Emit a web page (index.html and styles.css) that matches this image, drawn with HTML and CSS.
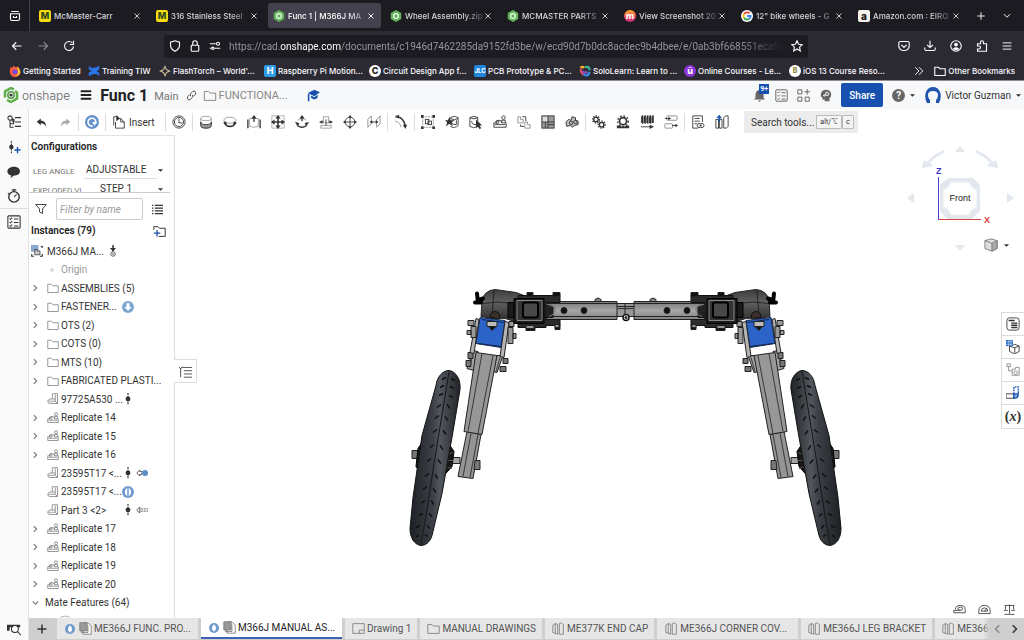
FILE: index.html
```html
<!DOCTYPE html>
<html lang="en">
<head>
    <meta charset="UTF-8">
    <meta name="viewport" content="width=device-width, initial-scale=1.0">
    <title>Func 1 | M366J MANUAL ASSEMBLY</title>
    <link rel="stylesheet" href="styles.css">
</head>
<body>
    <!-- icons -->
    <svg class="sprite" aria-hidden="true">
        <symbol id="x" viewBox="0 0 16 16"><path d="M4 4l8 8M12 4l-8 8"/></symbol>
        <symbol id="plus" viewBox="0 0 16 16"><path d="M8 2v12M2 8h12"/></symbol>
        <symbol id="down" viewBox="0 0 16 16"><path d="M3 5l5 5 5-5"/></symbol>
        <symbol id="right" viewBox="0 0 16 16"><path d="M5 3l5 5-5 5"/></symbol>
        <symbol id="left" viewBox="0 0 16 16"><path d="M11 3L6 8l5 5"/></symbol>
        <symbol id="caret" viewBox="0 0 16 16"><path class="solid" d="M2 5h12l-6 6z"/></symbol>
        <symbol id="history" viewBox="0 0 16 16"><path d="M3 2h10M2 5h12v7q0 2-2 2H4q-2 0-2-2zM6 8v2h4V8"/></symbol>
        <symbol id="back" viewBox="0 0 16 16"><path d="M14 8H2M7 3L2 8l5 5"/></symbol>
        <symbol id="forward" viewBox="0 0 16 16"><path d="M2 8h12M9 3l5 5-5 5"/></symbol>
        <symbol id="reload" viewBox="0 0 16 16"><path d="M14 8.500A6 6 0 1 1 12.500 4M14 1v5H9"/></symbol>
        <symbol id="shield" viewBox="0 0 16 16"><path d="M8 1l6 2v4q0 5-6 8-6-3-6-8V3z"/></symbol>
        <symbol id="lock" viewBox="0 0 16 16"><rect x="3" y="7" width="10" height="8" rx="1"/><path d="M5 7V4q0-3 3-3t3 3v3"/></symbol>
        <symbol id="perms" viewBox="0 0 16 16"><path d="M1 5h8M7 11h8M1 11h2"/><circle cx="12" cy="5" r="2"/><circle cx="5" cy="11" r="1.500"/></symbol>
        <symbol id="star" viewBox="0 0 16 16"><path d="M8 1l2.100 4.600 5 .6-3.700 3.400 1 5L8 12l-4.400 2.600 1-5L.9 6.200l5-.6z"/></symbol>
        <symbol id="pocket" viewBox="0 0 16 16"><path d="M3 2h10q2 0 2 2v3q0 7-7 7T1 7V4q0-2 2-2zM4.500 6.500L8 10l3.500-3.500"/></symbol>
        <symbol id="download" viewBox="0 0 16 16"><path d="M8 1v9M4 6.500L8 10l4-3.500M1 10v2q0 2 2 2h10q2 0 2-2v-2"/></symbol>
        <symbol id="account" viewBox="0 0 16 16"><circle cx="8" cy="8" r="7"/><circle class="solid" cx="8" cy="6" r="2.500"/><path class="solid" d="M3.500 12q1-2.500 4.500-2.500t4.500 2.500Q8 15 3.500 12z"/></symbol>
        <symbol id="puzzle" viewBox="0 0 16 16"><path d="M2 5h4V3q0-2 2-2t2 2v2h4v10H2v-3h2q2 0 2-2T4 8H2z"/></symbol>
        <symbol id="menu" viewBox="0 0 16 16"><path d="M1 3h14M1 8h14M1 13h14"/></symbol>
        <symbol id="more" viewBox="0 0 16 16"><path d="M2 2l6 6-6 6M8 2l6 6-6 6"/></symbol>
        <symbol id="folder" viewBox="0 0 16 16"><path d="M1 3h5l2 2h7v9H1z"/></symbol>
        <symbol id="hex" viewBox="0 0 16 16"><path class="solid" d="M8 0l7 4v8l-7 4-7-4V4z"/><circle cx="8" cy="8" r="3.200" class="ring"/></symbol>
        <symbol id="firefox" viewBox="0 0 16 16"><path fill="#ff5a36" stroke="none" d="M2 3l2 1 2-3q2 2 4 2l1-1q5 4 4 9-2 5-7 5-6 0-7-7 0-4 1-6z"/><circle cx="8" cy="9" r="3.500" fill="#7a4be0" stroke="none"/><path fill="#ffc933" stroke="none" d="M11 2q4 3 4 8-2 5-7 5 5-2 4-7-1-3-1-6z"/></symbol>
        <symbol id="confluence" viewBox="0 0 16 16"><path fill="#2874e8" stroke="none" d="M1 1q4 6 14 0v5q-3 2-4 2 3 1 4 3v4Q11 9 1 15v-5q2-1 4-2-3-1-4-3z"/></symbol>
        <symbol id="spark" viewBox="0 0 16 16"><path fill="#c9b894" stroke="none" fill-rule="evenodd" d="M8 0l2.500 5.500L16 8l-5.500 2.500L8 16l-2.500-5.500L0 8l5.500-2.500zM8 4L6.500 6.500 4 8l2.500 1.500L8 12l1.500-2.500L12 8 9.500 6.500z"/></symbol>
        <symbol id="swirl" viewBox="0 0 16 16"><g fill="none" stroke-width="3"><path stroke="#f4b62e" d="M7 4Q4 1 2 4"/><path stroke="#e24b6a" d="M3 5q-2 5 3 8"/><path stroke="#2e8de4" d="M6 13q7 3 8-4"/><path stroke="#39b59b" d="M8 3q6-2 6 4"/><path stroke="#8d51c7" d="M5 8q2 4 6 1"/></g></symbol>
        <symbol id="google" viewBox="0 0 16 16"><circle class="white" cx="8" cy="8" r="8"/><g fill="none" stroke-width="2.500"><path stroke="#ea4335" d="M4 5.500A4.800 4.800 0 0 1 11.500 4.500"/><path stroke="#fbbc05" d="M4 5.500a5 5 0 0 0 0 5"/><path stroke="#34a853" d="M4 10.500a4.800 4.800 0 0 0 7 1.200"/><path stroke="#4285f4" d="M8 8h4.800q0 2.500-1.800 3.700"/></g></symbol>

        <symbol id="tree" viewBox="0 0 16 16"><circle cx="3.500" cy="3.500" r="2.500"/><path d="M3.500 6v8h4M3.500 10h4V6M9 3h7M9 8h7M9 13h7"/><circle cx="7" cy="6" r="1.300"/></symbol>
        <symbol id="mate-add" viewBox="0 0 16 16"><path d="M5 1v14" stroke-dasharray="2 1"/><circle class="solid" cx="5" cy="8" r="2.500"/><path class="blue" d="M12 8v7M8.500 11.500h7"/></symbol>
        <symbol id="bubble" viewBox="0 0 16 16"><path class="solid" d="M8 2c9 0 9 10 1 10-2 0-3 2-5 3l1-3C-2 11-1 2 8 2z"/></symbol>
        <symbol id="timer" viewBox="0 0 16 16"><circle cx="8" cy="9" r="6" stroke-width="1.600"/><path d="M8 3V1M5.500 1h5M8 9l3-3M2.500 4.500L1 6"/></symbol>
        <symbol id="checks" viewBox="0 0 16 16"><rect x="1" y="1" width="14" height="14" rx="1"/><path d="M3 4l1 1 2-2M3 8l1 1 2-2M3 12l1 1 2-2M8 4.500h5M8 8.500h5M8 12.500h5"/></symbol>
        <symbol id="find" viewBox="0 0 16 16"><path class="solid" d="M0 3h15v3H0zM0 6h3v4H0z"/><circle cx="9" cy="8" r="4" class="white"/><circle cx="9" cy="8" r="4"/><path d="M12 11l4 4"/></symbol>
        <symbol id="undo" viewBox="0 0 16 16"><path class="solid" d="M1 7l6-5v3q7 0 8 9-3-5-8-5v3z"/></symbol>
        <symbol id="redo" viewBox="0 0 16 16"><path class="solid" d="M15 7L9 2v3Q2 5 1 14q3-5 8-5v3z"/></symbol>
        <symbol id="update" viewBox="0 0 16 16"><circle cx="8" cy="8" r="8" fill="#6493cb" stroke="none"/><path d="M9 12.500A4.500 4.500 0 1 1 12.300 9" stroke="#fff" stroke-width="1.800"/><path fill="#fff" stroke="none" d="M8 8h6l-3 4z"/></symbol>
        <symbol id="insert" viewBox="0 0 16 16"><path d="M5 4h5l4 4v7H4V8M10 4v4h4M2 12V2h4"/><path class="solid" d="M5 0l4 4-4 3z"/></symbol>
        <symbol id="clock" viewBox="0 0 16 16"><circle cx="8" cy="8" r="7"/><circle cx="8" cy="8" r="5.200"/><path d="M8 4v5h4"/></symbol>
        <symbol id="cyl" viewBox="0 0 16 16"><ellipse cx="8" cy="4" rx="6" ry="2.500" stroke="#999"/><path d="M2 4v8q0 3 6 3t6-3V4" stroke="#999"/><path fill="#999" d="M2 8q0 3 6 3t6-3v4q0 3-6 3t-6-3z"/></symbol>
        <symbol id="revolute" viewBox="0 0 16 16"><ellipse cx="8" cy="6" rx="7" ry="3.500" stroke="#999"/><path d="M2 9q1 4 6 4t6-4" stroke-width="2"/><path class="solid" d="M0 9l3-2 2 4zM16 9l-3-2-2 4z"/></symbol>
        <symbol id="slider" viewBox="0 0 16 16"><path d="M3 4h10v9q-5 2-10 0z" stroke="#999"/><path d="M1 5v10M15 5v10M8 8V2" stroke-width="1.500"/><path class="solid" d="M8 0l3 4H5z"/></symbol>
        <symbol id="planar" viewBox="0 0 16 16"><rect x="1" y="1" width="14" height="14" stroke="#aaa"/><path d="M8 2v12M2 8h12" stroke-width="1.800"/><path class="solid" d="M8 0l3 4H5zM8 16l-3-4h6zM0 8l4-3v6zM16 8l-4-3v6z"/></symbol>
        <symbol id="cylmate" viewBox="0 0 16 16"><path d="M3 6q5-4 10 0" stroke="#999"/><path d="M3 12q5 4 10 0M8 7V3" stroke-width="1.500"/><path class="solid" d="M8 0l3 4H5zM0 8l5 1-2 4zM16 8l-5 1 2 4z"/></symbol>
        <symbol id="pinslot" viewBox="0 0 16 16"><path d="M5 2h6v7H5zM2 12h12v3H2z" stroke="#999"/><path d="M2 8h3M11 8h3M8 5v7"/><path class="solid" d="M0 8l4-2v4zM16 8l-4-2v4z"/></symbol>
        <symbol id="ball" viewBox="0 0 16 16"><circle cx="8" cy="8" r="5.500"/><path d="M8 1v14M1 8h14"/><path class="solid" d="M8 0l2 3H6zM8 16l-2-3h4zM0 8l3-2v4zM16 8l-3-2v4z"/></symbol>
        <symbol id="parallel" viewBox="0 0 16 16"><path d="M1 14V5l4-4v9zM11 14V5l4-4v9z" stroke="#888"/><path d="M4 8h8"/><path class="solid" d="M3 8l3-2v4zM13 8l-3-2v4z"/></symbol>
        <symbol id="tangent" viewBox="0 0 16 16"><path d="M1 3h4q8 1 8 11M1 7q6 1 7 7" stroke="#999"/><path d="M4 2q7 1 9 11" stroke-width="1.500"/><path class="solid" d="M1 1l5-1-1 4zM10 11h5l-2 5z"/></symbol>
        <symbol id="group" viewBox="0 0 16 16"><rect x="2" y="2" width="12" height="12" stroke-dasharray="2 1" stroke="#888"/><rect x="5" y="5" width="4" height="5"/><rect x="8" y="7" width="4" height="4"/><path class="solid" d="M0 0h3v3H0zM13 0h3v3h-3zM0 13h3v3H0zM13 13h3v3h-3z"/></symbol>
        <symbol id="cylstar" viewBox="0 0 16 16"><path d="M6 3q5-3 9 0v9q-4 4-9 1M15 4q-4 3-9 0M7 7q0 4 6 4V6"/><path class="solid" d="M5 2l1.500 4H11L7.500 8.500 9 13l-4-3-4 3 1.500-4.500L0 6h3.500z"/></symbol>
        <symbol id="cylpick" viewBox="0 0 16 16"><path d="M1 3q5-3 9 0v10q-5 3-9 0zM10 3q-4 3-9 0M3 7q0 4 5 4"/><path class="solid" d="M8 5l7 7h-3l2 3-2 1-2-3-2 2z"/></symbol>
        <symbol id="replicate" viewBox="0 0 16 16"><path d="M1 14V9h3q0-3 3-3t3 3h5v5zM10 9V6h4v3M2 11h12"/><circle cx="5" cy="8" r="1.800"/><circle cx="12" cy="3" r="2"/></symbol>
        <symbol id="pattern" viewBox="0 0 16 16"><path d="M1 2h3v3h3v4H1zM9 8h3v3h3v4H9z" stroke="#888"/><path d="M4 11v2h4M6 2h4v5"/></symbol>
        <symbol id="grid" viewBox="0 0 16 16"><rect x="1" y="1" width="14" height="14" fill="#999"/><path fill="#ddd" stroke="none" d="M2 2h6v6H2z"/><path d="M8 1v14M1 8h14M5 8v7M8 11h7"/></symbol>
        <symbol id="blob" viewBox="0 0 16 16"><path fill="#bbb" d="M1 8l3-3 3 1 1-4 4 1v3l3 1v4l-4 1-2 2-3-2-4 1z"/><circle cx="7" cy="9" r="2"/><circle cx="12" cy="8" r="2"/></symbol>
        <symbol id="gears" viewBox="0 0 16 16"><circle cx="4.500" cy="5" r="2.500" stroke-width="1.500"/><circle cx="4.500" cy="5" r="4" stroke-dasharray="1.500 1.500" stroke-width="1.500"/><circle cx="11" cy="11" r="2.500" stroke-width="1.500"/><circle cx="11" cy="11" r="4" stroke-dasharray="1.500 1.500" stroke-width="1.500"/></symbol>
        <symbol id="rack" viewBox="0 0 16 16"><circle cx="8" cy="7" r="4" stroke-width="2"/><circle cx="8" cy="7" r="6" stroke-dasharray="2 2" stroke-width="1.500"/><path class="solid" d="M1 12h3l2 1h4l2-1h3v3H1z"/></symbol>
        <symbol id="screw" viewBox="0 0 16 16"><path stroke-width="1.500" d="M2 9V3q0-2 1-2v9M5 9V3q0-2 1-2v9M8 9V3q0-2 1-2v9M11 9V3q0-2 1-2v9M14 9V3q0-2 1-2v8"/><path d="M1 13.500h11"/><path class="solid" d="M11 11l5 2.500-5 2.500z"/></symbol>
        <symbol id="linear" viewBox="0 0 16 16"><rect x="3" y="1" width="12" height="5" rx="1" stroke="#888"/><rect x="1" y="10" width="9" height="5" rx="1" stroke="#888"/><path d="M1 4h6M9 12h6"/><path class="solid" d="M5 2l3 2-3 2zM13 10l3 2-3 2z"/></symbol>
        <symbol id="bom" viewBox="0 0 16 16"><path d="M2 1h11v7M2 1v14h6M4 4h6M4 7h6M4 10h3"/><ellipse cx="11" cy="12" rx="4" ry="2.500"/><circle class="solid" cx="11" cy="12" r="1.200"/></symbol>
        <symbol id="stdpart" viewBox="0 0 16 16"><path d="M1 5h3v10H1zM5 5h3v10H5zM10 3l2-2h3v12l-2 2h-3z"/><path class="blue" d="M5 8V1M2.500 3.500L5 1l2 2.500"/></symbol>

        <symbol id="filter" viewBox="0 0 16 16"><path d="M1 2h14l-5 6v6l-4-2V8z"/></symbol>
        <symbol id="list" viewBox="0 0 16 16"><path stroke-width="2" d="M4 2h12M4 6h12M4 10h12M4 14h12M0 2h2M0 6h2M0 10h2M0 14h2"/></symbol>
        <symbol id="addfolder" viewBox="0 0 16 16"><path d="M1 6V2h5l2 2h7v10H7"/><path class="blue" d="M5 6v8M1 10h8"/></symbol>
        <symbol id="assembly" viewBox="0 0 16 16"><path fill="#8aa9cf" stroke="none" d="M0 0h10v9H0z"/><path d="M5 12V6h3v2h4v5H5z" fill="#ccc"/><path d="M13 2h2v2M15 12v3h-3M1 12v3h3" stroke-width="1.500"/></symbol>
        <symbol id="anchor" viewBox="0 0 16 16"><path d="M8 0v8" stroke-width="2"/><path class="solid" d="M4 4h8l-4 5z"/><circle cx="8" cy="12" r="3"/><circle class="solid" cx="8" cy="12" r="1"/></symbol>
        <symbol id="part" viewBox="0 0 16 16"><path d="M7 1h7v13H4q-3 0-3-3 0-2 3-3h3zM7 8h4v3H2M11 8V2M11 11l3 3"/></symbol>
        <symbol id="dof" viewBox="0 0 16 16"><path d="M8 0v16" stroke-dasharray="3 1" stroke-width="1.500"/><circle class="solid" cx="8" cy="8" r="3.200"/></symbol>
        <symbol id="ref" viewBox="0 0 16 16"><path d="M5 4L1 8l4 4z"/><path d="M6 6.500h10M6 9.500h10" stroke-dasharray="3 1"/></symbol>
        <symbol id="refdot" viewBox="0 0 16 16"><path d="M5 4L1 8l4 4v-2h3V6H5z"/><circle cx="12" cy="8" r="4" fill="#5b8dc7" stroke="none"/></symbol>
        <symbol id="arrowdisc" viewBox="0 0 16 16"><circle cx="8" cy="8" r="8" fill="#7ba6d3" stroke="none"/><path class="white" d="M6 3h4v5h3l-5 5-5-5h3z"/></symbol>
        <symbol id="syncdisc" viewBox="0 0 16 16"><circle cx="8" cy="8" r="8" fill="#6f9bcc" stroke="none"/><path class="white" d="M7 2v12l-3-4V6zM9 2v12l3-4V6z"/></symbol>
        <symbol id="statedisc" viewBox="0 0 16 16"><circle cx="8" cy="8" r="8" fill="#6f9bcc" stroke="none"/><path class="white" d="M8 2l3 4v4l-3 4-3-4V6z"/></symbol>
        <symbol id="outline" viewBox="0 0 16 16"><path d="M4 3h12M6 7h10M6 11h10M6 15h10M0 2l2 3 2-3M2 5v10"/></symbol>
        <symbol id="asmtab" viewBox="0 0 16 16"><path fill="#fff" d="M5 1h6l4 4v10H5z"/><path fill="#999" d="M1 1h9v10H1z"/><path d="M3 11v2h8V4"/></symbol>
        <symbol id="drawtab" viewBox="0 0 16 16"><path d="M1 2h14v12H1zM9 14v-4h6"/></symbol>
        <symbol id="studio" viewBox="0 0 16 16"><path d="M1 4l3-2v12l-3-1zM4 2l3 1v12l-3-1M9 2l2-1 3 2v12H9z"/></symbol>

        <symbol id="tape" viewBox="0 0 16 16"><path d="M3 8q0-5 6-5t6 5v4H1V9h8"/><ellipse cx="9" cy="7" rx="3" ry="2"/></symbol>
        <symbol id="protractor" viewBox="0 0 16 16"><path d="M1 13V10q0-7 7-7t7 7v3zM4 10q0-4 4-4t4 4zM8 10l3-4"/></symbol>
        <symbol id="scale" viewBox="0 0 16 16"><path d="M8 2v11M2 3h12M3 3v5M13 3v5M1 9h5M10 9h5M2 14h12"/></symbol>
        <symbol id="proplist" viewBox="0 0 16 16"><rect x="1" y="1" width="14" height="14" rx="3"/><path stroke-width="1.600" d="M3 4h7M6 7h7M6 9.500h7M6 12h7"/></symbol>
        <symbol id="cubegrid" viewBox="0 0 16 16"><path d="M4 7l6-2 5 2v6l-5 3-6-3zM4 7l6 2 5-2M10 9v6"/><path fill="#2b6fc4" stroke="none" d="M0 0h8v7H0z"/><path stroke="#fff" stroke-width=".5" d="M0 2h8M0 5h8M3 0v7M5.500 0v7"/></symbol>
        <symbol id="linkpart" viewBox="0 0 16 16"><path d="M1 1h4v3H1zM3 4v5h4M7 7h4V5h4v9H7z"/><circle cx="11" cy="11" r="2"/></symbol>
        <symbol id="sheet" viewBox="0 0 16 16"><path d="M0 9h9v5H0z"/><path class="blue" d="M9 9V1h5v8" stroke-dasharray="2 1"/><path class="blue" fill="#9bb8dd" d="M9 9h5q0 5-5 5z"/></symbol>
    </svg>

    <div class="browser">
        <div class="tab-strip">
            <button class="recent" aria-label="Recent browsing"><svg class="icon"><use href="#history"/></svg></button>
            <div class="tab"><span class="fav mc">M</span><span class="tab-name">McMaster-Carr</span><button class="close" aria-label="Close"><svg><use href="#x"/></svg></button></div>
            <div class="tab"><span class="fav mc">M</span><span class="tab-name fade">316 Stainless Steel</span><button class="close" aria-label="Close"><svg><use href="#x"/></svg></button></div>
            <div class="tab current"><svg class="fav hex"><use href="#hex"/></svg><span class="tab-name fade">Func 1 | M366J MA</span><button class="close" aria-label="Close"><svg><use href="#x"/></svg></button></div>
            <div class="tab"><svg class="fav hex"><use href="#hex"/></svg><span class="tab-name fade">Wheel Assembly.zip</span><button class="close" aria-label="Close"><svg><use href="#x"/></svg></button></div>
            <div class="tab"><svg class="fav hex"><use href="#hex"/></svg><span class="tab-name fade">MCMASTER PARTS</span><button class="close" aria-label="Close"><svg><use href="#x"/></svg></button></div>
            <div class="tab"><span class="fav shot">m</span><span class="tab-name fade">View Screenshot 202</span><button class="close" aria-label="Close"><svg><use href="#x"/></svg></button></div>
            <div class="tab"><svg class="fav"><use href="#google"/></svg><span class="tab-name fade">12" bike wheels - G</span><button class="close" aria-label="Close"><svg><use href="#x"/></svg></button></div>
            <div class="tab"><span class="fav amazon">a</span><span class="tab-name fade">Amazon.com : EIRO</span><button class="close" aria-label="Close"><svg><use href="#x"/></svg></button></div>
            <button class="strip-button" aria-label="New tab"><svg class="small-icon"><use href="#plus"/></svg></button>
            <button class="strip-button last" aria-label="List all tabs"><svg class="small-icon"><use href="#down"/></svg></button>
        </div>

        <div class="nav-bar">
            <div class="nav-buttons">
                <button aria-label="Back"><svg class="icon"><use href="#back"/></svg></button>
                <button class="dim" aria-label="Forward"><svg class="icon"><use href="#forward"/></svg></button>
                <button aria-label="Reload"><svg class="icon"><use href="#reload"/></svg></button>
            </div>
            <div class="url-bar">
                <svg class="icon"><use href="#shield"/></svg>
                <svg class="icon"><use href="#lock"/></svg>
                <svg class="icon"><use href="#perms"/></svg>
                <div class="url" role="textbox" aria-label="Address" contenteditable="true" spellcheck="false">https://cad.<span class="domain">onshape.com</span>/documents/c1946d7462285da9152fd3be/w/ecd90d7b0dc8acdec9b4dbee/e/0ab3bf668551ecafe</div>
                <button aria-label="Bookmark this page"><svg class="icon"><use href="#star"/></svg></button>
            </div>
            <div class="nav-tools">
                <button aria-label="Pocket"><svg class="icon"><use href="#pocket"/></svg></button>
                <button aria-label="Downloads"><svg class="icon"><use href="#download"/></svg></button>
                <button aria-label="Account"><svg class="icon"><use href="#account"/></svg></button>
                <button aria-label="Extensions"><svg class="icon"><use href="#puzzle"/></svg></button>
                <button aria-label="Menu"><svg class="small-icon"><use href="#menu"/></svg></button>
            </div>
        </div>

        <nav class="bookmarks">
            <a href="#" class="bm-first"><svg class="fav"><use href="#firefox"/></svg>Getting Started</a>
            <a href="#" class="bm-short"><svg class="fav"><use href="#confluence"/></svg>Training TIW</a>
            <a href="#"><svg class="fav"><use href="#spark"/></svg>FlashTorch – World'...</a>
            <a href="#"><span class="fav hack">H</span>Raspberry Pi Motion...</a>
            <a href="#"><span class="fav circuit">C</span>Circuit Design App f...</a>
            <a href="#"><span class="fav jlc">JLC</span>PCB Prototype &amp; PC...</a>
            <a href="#"><svg class="fav"><use href="#swirl"/></svg>SoloLearn: Learn to ...</a>
            <a href="#"><span class="fav udemy">û</span>Online Courses - Le...</a>
            <a href="#"><span class="fav ios">B</span>iOS 13 Course Reso...</a>
            <button class="overflow" aria-label="More bookmarks"><svg class="small-icon"><use href="#more"/></svg></button>
            <a href="#" class="other"><svg class="fav"><use href="#folder"/></svg>Other Bookmarks</a>
        </nav>
    </div>

    <header class="doc-header">
        <svg class="logo" viewBox="0 0 16 16"><path fill="none" stroke="#5fae46" stroke-width="2.500" d="M11 2.500L8 1 2 4.500v6M4 13l4 2 6-3.500v-6L12 4"/><circle cx="8" cy="8" r="3.200" fill="none" stroke="#4f9c3d" stroke-width="1.500"/><circle cx="8" cy="8" r="1" fill="#4f9c3d"/></svg>
        <span class="brand">onshape</span>
        <button class="doc-menu" aria-label="Document menu"><svg class="icon"><use href="#menu"/></svg></button>
        <h1>Func 1</h1>
        <span class="workspace">Main</span>
        <svg class="link-icon" viewBox="0 0 16 16"><path d="M7 9q-2-2 0-4l3-3q2-1 3 0t1 4l-3 3M9 7q2 2 0 4l-3 3q-2 1-3 0t-1-4l3-3"/></svg>
        <a href="#" class="project"><svg><use href="#folder"/></svg>FUNCTIONA...</a>
        <svg class="cap" viewBox="0 0 16 16"><path d="M1 5l8-4 7 3-7 5zM5 8l4 2 4-3v4l-4 2-4-2zM1 6h2v9H1z"/></svg>
        <div class="account">
            <button class="bell" aria-label="Notifications"><svg viewBox="0 0 16 16"><path d="M8 1q5 1 5 7v3l2 2H1l2-2V8q0-6 5-7zM6 14h4l-2 2z"/></svg><span class="badge">9+</span></button>
            <button aria-label="Tasks"><svg><use href="#checks"/></svg></button>
            <button aria-label="App store"><svg viewBox="0 0 16 16"><path d="M1 1h5v5H1zM1 10h5v5H1zM10 10h5v5h-5zM12.500 0v7M9 3.500h7"/></svg></button>
            <button aria-label="Learning"><svg viewBox="0 0 16 16"><path class="solid" d="M8 1q7 0 7 6 0 3-2 4v4H7v-2H4v-3L2 9q0-8 6-8z"/><path stroke="#fff" d="M5 8l3-1M6 9l2-1"/><circle cx="10" cy="6" r="2" stroke="#fff"/></svg></button>
            <button class="share">Share</button>
            <button class="help" aria-label="Help"><span>?</span><svg class="caret"><use href="#caret"/></svg></button>
            <button class="user"><svg class="avatar" viewBox="0 0 16 16"><path d="M2 16Q-1 10 1 5q2-5 7-5t7 5q2 5-1 11h-3v-3q2-2 2-5 0-4-5-4T3 8q0 3 2 5v3z"/></svg>Victor Guzman<svg class="caret"><use href="#caret"/></svg></button>
        </div>
    </header>

    <div class="workspace-area">
        <aside class="rail">
            <button aria-label="Features"><svg><use href="#tree"/></svg></button>
            <button aria-label="Add mate"><svg><use href="#mate-add"/></svg></button>
            <button aria-label="Comments"><svg><use href="#bubble"/></svg></button>
            <button class="ruled" aria-label="History"><svg><use href="#timer"/></svg></button>
            <button aria-label="Checklist"><svg><use href="#checks"/></svg></button>
            <button class="rail-end" aria-label="Find tabs"><svg><use href="#find"/></svg></button>
        </aside>

        <main class="editor">
            <div class="toolbar">
                <button class="undo" aria-label="Undo"><svg><use href="#undo"/></svg></button>
                <button class="undo faded" aria-label="Redo"><svg><use href="#redo"/></svg></button>
                <span class="sep"></span>
                <button aria-label="Update"><svg><use href="#update"/></svg></button>
                <span class="sep"></span>
                <button class="insert"><svg><use href="#insert"/></svg>Insert</button>
                <span class="sep"></span>
                <button aria-label="Animate"><svg><use href="#clock"/></svg></button>
                <span class="sep"></span>
                <button aria-label="Fastened"><svg><use href="#cyl"/></svg></button>
                <button aria-label="Revolute"><svg><use href="#revolute"/></svg></button>
                <button aria-label="Slider"><svg><use href="#slider"/></svg></button>
                <button aria-label="Planar"><svg><use href="#planar"/></svg></button>
                <button aria-label="Cylindrical"><svg><use href="#cylmate"/></svg></button>
                <button aria-label="Pin slot"><svg><use href="#pinslot"/></svg></button>
                <button aria-label="Ball"><svg><use href="#ball"/></svg></button>
                <button aria-label="Parallel"><svg><use href="#parallel"/></svg></button>
                <span class="sep"></span>
                <button aria-label="Tangent"><svg><use href="#tangent"/></svg></button>
                <span class="sep"></span>
                <button aria-label="Group"><svg><use href="#group"/></svg></button>
                <button aria-label="Mate connector"><svg><use href="#cylstar"/></svg></button>
                <button aria-label="Select part"><svg><use href="#cylpick"/></svg></button>
                <button aria-label="Replicate"><svg><use href="#replicate"/></svg></button>
                <button aria-label="Pattern"><svg><use href="#pattern"/></svg></button>
                <button aria-label="Configure"><svg><use href="#grid"/></svg></button>
                <button aria-label="Snap"><svg><use href="#blob"/></svg></button>
                <span class="sep"></span>
                <button aria-label="Gear relation"><svg><use href="#gears"/></svg></button>
                <button aria-label="Rack and pinion"><svg><use href="#rack"/></svg></button>
                <button aria-label="Screw relation"><svg><use href="#screw"/></svg></button>
                <button aria-label="Linear relation"><svg><use href="#linear"/></svg></button>
                <span class="sep"></span>
                <button aria-label="Display states"><svg><use href="#bom"/></svg></button>
                <button aria-label="Standard parts"><svg><use href="#stdpart"/></svg></button>
                <button class="search-tools">Search tools... <kbd>alt/⌥</kbd><kbd>c</kbd></button>
            </div>

            <div class="stage">
                <section class="panel">
                    <div class="config">
                        <h2>Configurations</h2>
                        <div class="config-row">
                            <label for="leg-angle">LEG ANGLE</label>
                            <select id="leg-angle"><option>ADJUSTABLE</option></select>
                            <svg class="caret"><use href="#caret"/></svg>
                        </div>
                        <div class="config-row second">
                            <label for="exploded">EXPLODED VI</label>
                            <select id="exploded"><option>STEP 1</option></select>
                            <svg class="caret"><use href="#caret"/></svg>
                        </div>
                    </div>
                    <div class="filter-row">
                        <svg><use href="#filter"/></svg>
                        <input type="text" placeholder="Filter by name" aria-label="Filter by name">
                        <button aria-label="List options"><svg><use href="#list"/></svg></button>
                    </div>
                    <div class="instances">
                        <h2>Instances (79)</h2>
                        <button aria-label="Add folder"><svg><use href="#addfolder"/></svg></button>
                    </div>
                    <ul class="tree">
                        <li class="root"><svg><use href="#assembly"/></svg><span>M366J MA...</span><svg><use href="#anchor"/></svg></li>
                        <li class="origin"><i></i><span>Origin</span></li>
                        <li><svg class="chev"><use href="#right"/></svg><svg class="kind"><use href="#folder"/></svg><span>ASSEMBLIES (5)</span></li>
                        <li><svg class="chev"><use href="#right"/></svg><svg class="kind"><use href="#folder"/></svg><span class="cut">FASTENER...</span><svg class="mark"><use href="#arrowdisc"/></svg></li>
                        <li><svg class="chev"><use href="#right"/></svg><svg class="kind"><use href="#folder"/></svg><span>OTS (2)</span></li>
                        <li><svg class="chev"><use href="#right"/></svg><svg class="kind"><use href="#folder"/></svg><span>COTS (0)</span></li>
                        <li><svg class="chev"><use href="#right"/></svg><svg class="kind"><use href="#folder"/></svg><span>MTS (10)</span></li>
                        <li><svg class="chev"><use href="#right"/></svg><svg class="kind"><use href="#folder"/></svg><span>FABRICATED PLASTI...</span></li>
                        <li class="leaf"><svg class="kind"><use href="#part"/></svg><span class="cut">97725A530 ...</span><svg class="mark"><use href="#dof"/></svg></li>
                        <li><svg class="chev"><use href="#right"/></svg><svg class="kind"><use href="#replicate"/></svg><span>Replicate 14</span></li>
                        <li><svg class="chev"><use href="#right"/></svg><svg class="kind"><use href="#replicate"/></svg><span>Replicate 15</span></li>
                        <li><svg class="chev"><use href="#right"/></svg><svg class="kind"><use href="#replicate"/></svg><span>Replicate 16</span></li>
                        <li class="leaf"><svg class="kind"><use href="#part"/></svg><span class="cut">23595T17 &lt;...</span><svg class="mark"><use href="#dof"/></svg><svg class="ref"><use href="#refdot"/></svg></li>
                        <li class="leaf"><svg class="kind"><use href="#part"/></svg><span class="cut">23595T17 &lt;...</span><svg class="mark"><use href="#syncdisc"/></svg></li>
                        <li class="leaf"><svg class="kind"><use href="#part"/></svg><span class="cut">Part 3 &lt;2&gt;</span><svg class="mark"><use href="#dof"/></svg><svg class="ref"><use href="#ref"/></svg></li>
                        <li><svg class="chev"><use href="#right"/></svg><svg class="kind"><use href="#replicate"/></svg><span>Replicate 17</span></li>
                        <li><svg class="chev"><use href="#right"/></svg><svg class="kind"><use href="#replicate"/></svg><span>Replicate 18</span></li>
                        <li><svg class="chev"><use href="#right"/></svg><svg class="kind"><use href="#replicate"/></svg><span>Replicate 19</span></li>
                        <li><svg class="chev"><use href="#right"/></svg><svg class="kind"><use href="#replicate"/></svg><span>Replicate 20</span></li>
                        <li class="mates"><svg class="chev"><use href="#down"/></svg><span>Mate Features (64)</span></li>
                        <li class="mate"><svg class="chev"><use href="#right"/></svg><svg class="kind"><use href="#cyl"/></svg></li>
                    </ul>
                </section>

                <div class="canvas">
                    <svg class="model" viewBox="175 135 849 482">
                        <defs>
                            <linearGradient id="tire" x1="0" x2="1"><stop offset="0" stop-color="#1d2024"/><stop offset=".45" stop-color="#3c4046"/><stop offset=".6" stop-color="#52575d"/><stop offset="1" stop-color="#202327"/></linearGradient>
                            <linearGradient id="tube" x1="0" x2="0" y1="0" y2="1"><stop offset="0" stop-color="#777"/><stop offset=".5" stop-color="#a6a6a6"/><stop offset="1" stop-color="#808080"/></linearGradient>
                            <linearGradient id="elbow" x1="0" x2="0" y1="0" y2="1"><stop offset="0" stop-color="#3c3c3c"/><stop offset=".4" stop-color="#606060"/><stop offset="1" stop-color="#2a2a2a"/></linearGradient>
                            <g id="half" stroke="#222" stroke-width="1" stroke-linejoin="round">
                                <!-- cross bar -->
                                <path fill="#999" d="M616 303h10v13h-10z"/>
                                <path fill="url(#tube)" d="M543 301h74v18h-74z"/>
                                <path fill="none" d="M545 303h72M545 316h72M617 306h9"/>
                                <path fill="#888" d="M595 301v-2q3-3 6 0v2z"/>
                                <circle cx="564" cy="310" r="3" fill="#111"/><circle cx="584" cy="310" r="3" fill="#111"/>
                                <!-- leg -->
                                <path fill="#949494" d="M467 431l14 3-8 44-15-2z"/>
                                <path fill="none" stroke-width=".8" d="M471 433l-8 43M478 434l-8 43"/>
                                <path fill="#a3a3a3" d="M473 350l5 1-4 19-7-2zM497 355l6 0-6 17-5-1z"/>
                                <path fill="#979797" d="M476 352l21 3-15 79-18-3z"/>
                                <path fill="none" stroke-width=".8" d="M482 353l-14 78M493 355l-15 78M500 357l-4 14M472 355l-2 12"/>
                                <path fill="#777" d="M468 352h5v6h-5zM466 360h5v6h-5zM503 358h5v5h-5zM500 366h6v5h-6z"/>
                                <!-- blue block and side plates -->
                                <path fill="#2b63c8" stroke="#13284f" d="M480 317l25 3-4 27-25-4z"/>
                                <path fill="none" stroke="#13284f" d="M478 343l24 3M482 319l22 3"/>
                                <path fill="#b5b5b5" d="M476 318l3 1-5 34-4-1zM505 321l4 1-5 35-4-1z"/>
                                <path fill="#999" d="M468 320h6v5h-6zM471 326h5v11h-5zM467 330h4v4h-4zM508 327h5v16h-5zM509 321h5v5h-5zM513 333h3v5h-3z"/>
                                <path fill="#bbb" d="M487 321h10v5h-10z"/><path fill="#111" d="M489 326h7l-4 4z"/>
                                <!-- elbow -->
                                <path fill="url(#elbow)" d="M481 316l1-16q2-10 13-11l21 3 8 3h22v26h-31l-10-3q-8-1-12 0z"/>
                                <path fill="none" stroke="#111" stroke-width=".7" d="M494 290l-2 26M482 303q16-3 32 0"/>
                                <path fill="#3b2f2a" stroke="#111" d="M491 313q4-4 8 0l1 5-10-1z"/>
                                <path fill="#2b2b2b" stroke="#111" d="M518 295h42v7h-14v17h14v6h-14v2h-28v-15z"/>
                                <path fill="#1b1b1b" stroke="#000" d="M508 302h7v15h-7z"/>
                                <path fill="#1b1b1b" stroke="#000" d="M514 298h30v25h-30z"/>
                                <path fill="#333" stroke="#888" d="M517 300h25v20h-25z"/>
                                <rect x="523" y="302" width="15" height="15" rx="2" fill="#484848" stroke="#000" stroke-width="2"/>
                                <path fill="#222" stroke="#111" d="M544 306q8-3 9 1v10h-8z"/>
                                <path fill="none" stroke="#777" d="M549 305q7 0 6 5t-6 6"/>
                                <path fill="#111" d="M527 292h6v4h-6zM553 292h7v4h-7zM526 326h9v4h-9zM555 324h5v5h-5z"/>
                                <path fill="#999" d="M526 325h8v3h-8zM555 324h4v3h-4z"/>
                                <path stroke="#000" stroke-width="4" stroke-linecap="round" d="M477 293l1 9M475 302h6M480 299l3-1"/>
                                <!-- axle and wheel -->
                                <path fill="#a5a5a5" d="M446 457h14v6h-14z"/>
                                <path fill="#777" d="M475 460h5v9h-6zM412 450h6v8h-6z"/>
                                <path fill="#181818" stroke="#000" d="M424 439l-6 9-2 18 8 10 20-1 8-9 2-15-6-9z"/>
                                <path fill="none" stroke="#555" d="M419 450l6 2M418 456l6 1M418 462l6 0M448 454l5-2M447 460l6 0M446 466l6 2"/>
                                <path fill="url(#tire)" stroke="#111" d="M436 385c1-9 7-15 13-15 7 1 12 9 11 19l-7 42-11 62-10 42c-2 7-7 10-11 10-7-1-11-8-11-17l3-31 9-62z"/>
                                <path fill="none" stroke="#15171a" d="M449 371l-7 43-7 43-8 52-6 35"/>
                                <path fill="none" stroke="#0d0f11" stroke-width="1.400" d="M442 379l4-2M440 387l4-2M439 395l4-2M437 407l4-3M435 418l4-3M433 432l4-3M430 447l4-3M427 461l4-3M425 476l4-3M423 489l4-3M421 503l4-3M419 515l4-2M416 527l4-2M416 536l3-1M451 378l4 2M450 386l4 2M449 395l4 2M447 404l3 4M445 416l3 4M443 430l3 4M440 445l3 4M438 459l3 4M435 474l3 4M433 488l3 4M431 500l3 4M429 513l3 3M427 525l3 3M425 534l3 2"/>
                            </g>
                        </defs>
                        <use href="#half"/>
                        <use href="#half" transform="translate(1251 0) scale(-1 1)"/>
                        <path fill="none" stroke="#333" d="M618 308h15"/>
                        <circle cx="626" cy="317" r="3" fill="#fff" stroke="#111" stroke-width="1.500"/><circle cx="626" cy="317" r="1" fill="#111"/>
                    </svg>

                    <button class="handle" aria-label="Toggle list"><svg><use href="#outline"/></svg></button>

                    <div class="view-cube">
                        <svg viewBox="0 0 110 112">
                            <g fill="#e2e8ed">
                                <path d="M55 1l5 6H50zM55 106l5-6H50zM2 53l7-5v10zM109 53l-7-5v10z"/>
                                <path d="M17 23l2-8 3 2Q30 8 39 5v3Q31 11 25 18l3 3zM93 23l-2-8-3 2Q80 8 71 5v3q8 3 14 10l-3 3z"/>
                                <path d="M43 33h25l7 7v26l-8 8H42l-7-8V40z"/>
                            </g>
                            <path fill="#fff" stroke="#e9edf1" d="M46 37h18q2 6 8 8v17q-6 2-8 8H46q-2-6-8-8V45q6-2 8-8z"/>
                            <path stroke="#4a43d6" d="M33.500 32v43"/><path stroke="#d84545" d="M34 74.500h42"/>
                            <text x="31" y="29" class="axis-z">Z</text>
                            <text x="79" y="78" class="axis-x">X</text>
                            <text x="55" y="56" class="face">Front</text>
                        </svg>
                    </div>
                    <button class="view-mode" aria-label="View options"><svg class="box" viewBox="0 0 16 16"><path fill="#ddd" d="M1 3l7-2 7 2v9l-6 3-8-3z"/><path fill="#aaa" d="M9 6l6-3v9l-6 3z"/><path d="M1 3l8 3"/></svg><svg class="caret"><use href="#caret"/></svg></button>

                    <div class="side-tools">
                        <button aria-label="Properties"><svg><use href="#proplist"/></svg></button>
                        <button aria-label="Configuration table"><svg><use href="#cubegrid"/></svg></button>
                        <button class="pale" aria-label="In context"><svg><use href="#linkpart"/></svg></button>
                        <button aria-label="Exploded view"><svg><use href="#sheet"/></svg></button>
                        <button class="var" aria-label="Variables">(<i>x</i>)</button>
                    </div>

                    <div class="measure">
                        <button aria-label="Measure"><svg><use href="#tape"/></svg></button>
                        <button aria-label="Angle"><svg><use href="#protractor"/></svg></button>
                        <button aria-label="Mass properties"><svg><use href="#scale"/></svg></button>
                    </div>
                </div>
            </div>

            <div class="doc-tabs">
                <button class="add" aria-label="Insert tab"><svg><use href="#plus"/></svg></button>
                <button class="doc-tab wide"><svg class="state"><use href="#statedisc"/></svg><svg><use href="#asmtab"/></svg>ME366J FUNC. PRO...</button>
                <button class="doc-tab wide active"><svg class="state"><use href="#statedisc"/></svg><svg><use href="#asmtab"/></svg>M366J MANUAL AS...</button>
                <button class="doc-tab"><svg><use href="#drawtab"/></svg>Drawing 1</button>
                <button class="doc-tab"><svg><use href="#folder"/></svg>MANUAL DRAWINGS</button>
                <button class="doc-tab"><svg><use href="#studio"/></svg>ME377K END CAP</button>
                <button class="doc-tab wide"><svg><use href="#studio"/></svg>ME366J CORNER COV...</button>
                <button class="doc-tab"><svg><use href="#studio"/></svg>ME366J LEG BRACKET</button>
                <button class="doc-tab"><svg><use href="#studio"/></svg>ME366</button>
                <div class="tab-scroll">
                    <button class="dim" aria-label="Scroll left"><svg><use href="#left"/></svg></button>
                    <button aria-label="Scroll right"><svg><use href="#right"/></svg></button>
                </div>
            </div>
        </main>
    </div>
</body>
</html>
```
FILE: styles.css
```css
* {
    box-sizing: border-box;
}
body {
    margin: 0;
    height: 100vh;
    display: flex;
    flex-direction: column;
    overflow: hidden;
    font-family: Roboto, "Liberation Sans", sans-serif;
    font-size: 10px;
    color: #333;
    background-color: #fff;
}
button {
    display: flex;
    align-items: center;
    justify-content: center;
    padding: 0;
    border: none;
    background: none;
    color: inherit;
    font: inherit;
    cursor: pointer;
}
a {
    color: inherit;
    text-decoration: none;
}
h1, h2 {
    margin: 0;
}
svg {
    flex: none;
    fill: none;
    stroke: currentColor;
    stroke-width: 1.2px;
}
.sprite {
    position: absolute;
    width: 0;
    height: 0;
}
.solid {
    fill: currentColor;
    stroke: none;
}
.white {
    fill: #fff;
    stroke: none;
}
.ring {
    stroke: #fff;
    stroke-width: 1.5px;
}
.blue {
    stroke: #1651b0;
    stroke-width: 1.6px;
}
.icon {
    width: 12px;
    height: 12px;
}
.small-icon {
    width: 10px;
    height: 10px;
}
.caret {
    width: 7px;
    height: 7px;
}

/* browser window */
.browser {
    flex: none;
    color: #fbfbfe;
    background-color: #2b2a33;
    border-bottom: 1px solid #8e8e93;
    font-family: Inter, "Liberation Sans", sans-serif;
}
.browser svg {
    stroke-width: 1.5px;
}
.tab-strip {
    display: flex;
    align-items: center;
    gap: 4px;
    height: 31px;
    background-color: #1c1b22;
}
.recent {
    width: 30px;
    height: 31px;
    border-right: 1px solid #42414d;
}
.tab {
    display: flex;
    align-items: center;
    flex: 0 1 113px;
    min-width: 0;
    height: 25px;
    padding: 0 5px;
    border-radius: 3px;
    font-size: 8px;
    font-weight: 500;
    color: #d5d5da;
}
.tab.current {
    background-color: #42414d;
    color: #fff;
}
.fav {
    display: inline-flex;
    align-items: center;
    justify-content: center;
    flex: none;
    width: 12px;
    height: 12px;
    border-radius: 2px;
    font-size: 9px;
    font-weight: 800;
    line-height: 12px;
}
.tab-name {
    flex: 1;
    margin-left: 3px;
    overflow: hidden;
    white-space: nowrap;
}
.fade {
    mask-image: linear-gradient(to right, #000 75%, rgba(0, 0, 0, 0.2));
}
.close, .close svg {
    width: 10px;
    height: 10px;
}
.mc {
    background-color: #f6dc12;
    color: #2c4a1a;
}
.hex {
    color: #62b558;
}
.shot {
    border-radius: 50%;
    color: #fff;
    background: linear-gradient(#ffb02e, #f0455a 60%, #c22c85);
}
.amazon {
    background-color: #f3f1ea;
    color: #111;
    font-size: 10px;
}
.strip-button {
    width: 22px;
    height: 24px;
}
.nav-bar {
    display: flex;
    align-items: center;
    height: 30px;
}
.nav-buttons {
    display: flex;
    gap: 14px;
    width: 164px;
    padding-left: 11px;
}
.dim {
    opacity: 0.45;
}
.url-bar {
    display: flex;
    align-items: center;
    flex: 1;
    gap: 8px;
    min-width: 0;
    height: 23px;
    padding: 0 5px;
    border-radius: 3px;
    background-color: #1c1b22;
}
.url {
    flex: 1;
    min-width: 0;
    overflow: hidden;
    white-space: nowrap;
    font-family: Roboto, sans-serif;
    font-size: 10px;
    color: #94939b;
    outline: none;
    mask-image: linear-gradient(to right, #000 92%, transparent);
}
.domain {
    color: #fbfbfe;
}
.nav-tools {
    display: flex;
    justify-content: flex-end;
    gap: 14px;
    width: 216px;
    padding-right: 12px;
}
.bookmarks {
    display: flex;
    align-items: center;
    height: 19px;
    padding: 0 9px;
    font-size: 8px;
    font-weight: 500;
    white-space: nowrap;
}
.bookmarks a {
    display: flex;
    align-items: center;
    gap: 2px;
    flex: 0 1 105px;
}
.bookmarks .bm-first {
    flex-basis: 79px;
}
.bookmarks .bm-short {
    flex-basis: 71px;
}
.bookmarks .other {
    flex: none;
    margin-left: 10px;
}
.overflow {
    margin-left: auto;
}
.hack {
    background-color: #2e9fe6;
}
.circuit {
    border-radius: 50%;
    background-color: #fff;
    color: #222;
}
.jlc {
    background-color: #1f87dd;
    font-size: 6px;
}
.udemy {
    border-radius: 50%;
    background-color: #8b35d8;
}
.ios {
    border-radius: 50%;
    background-color: #fff;
    color: #8c8a3a;
    font-size: 7px;
}

/* document header */
.doc-header {
    display: flex;
    align-items: center;
    flex: none;
    height: 28px;
    padding: 0 2px 0 3px;
    background-color: #f7f8fa;
    white-space: nowrap;
}
.logo {
    width: 16px;
    height: 16px;
}
.brand {
    margin-left: 3px;
    font-family: Inter, sans-serif;
    font-size: 12px;
    font-weight: 300;
    color: #666;
}
.doc-menu {
    margin-left: 10px;
    color: #222;
}
.doc-menu svg {
    stroke-width: 2.5px;
}
h1 {
    margin-left: 8px;
    font-size: 16px;
    font-weight: 700;
    color: #222;
}
.workspace {
    margin: 2px 0 0 6px;
    font-size: 11px;
    color: #777;
}
.link-icon {
    width: 11px;
    height: 11px;
    margin-left: 7px;
}
.project {
    display: flex;
    align-items: center;
    gap: 2px;
    margin-left: 6px;
    font-size: 11px;
    color: #888;
}
.project svg {
    width: 14px;
    height: 13px;
}
.cap {
    width: 13px;
    height: 13px;
    margin-left: 19px;
    fill: #1651b0;
    stroke: none;
}
.account {
    display: flex;
    align-items: center;
    gap: 9px;
    margin-left: auto;
    color: #666;
}
.account svg {
    width: 13px;
    height: 13px;
}
.bell {
    position: relative;
}
.bell svg {
    fill: #666;
    stroke: none;
}
.badge {
    position: absolute;
    top: -5px;
    left: 6px;
    padding: 0 1px;
    background-color: #1651b0;
    color: #fff;
    font-size: 7px;
    font-weight: 700;
    line-height: 10px;
}
.share {
    width: 42px;
    height: 24px;
    border-radius: 2px;
    background-color: #1651b0;
    color: #fff;
    font-size: 10px;
    font-weight: 500;
}
.help {
    gap: 4px;
}
.help span {
    width: 13px;
    height: 13px;
    border-radius: 50%;
    background-color: #666;
    color: #fff;
    font-weight: 700;
    line-height: 13px;
}
.account .caret {
    width: 7px;
    height: 7px;
    color: #333;
}
.user {
    gap: 4px;
    color: #333;
}
.account .avatar {
    width: 16px;
    height: 16px;
    fill: #1f55ad;
    stroke: none;
}

/* left rail */
.workspace-area {
    display: flex;
    flex: 1;
    min-height: 0;
}
.rail {
    display: flex;
    flex-direction: column;
    flex: none;
    width: 29px;
    border-right: 1px solid #e2e2e2;
    background-color: #fafafa;
}
.rail button {
    height: 25px;
}
.rail button svg {
    width: 14px;
    height: 14px;
}
.rail .ruled {
    border-bottom: 1px solid #ddd;
}
.rail .rail-end {
    margin-top: auto;
    height: 22px;
}
.editor {
    display: flex;
    flex-direction: column;
    flex: 1;
    min-width: 0;
}

/* toolbar */
.toolbar {
    display: flex;
    align-items: center;
    flex: none;
    height: 26px;
}
.toolbar button {
    width: 24px;
    height: 22px;
}
.toolbar button svg {
    width: 14px;
    height: 14px;
    stroke-width: 1px;
}
.toolbar .faded {
    color: #aaa;
}
.toolbar .undo svg {
    width: 11px;
    height: 11px;
}
.sep {
    width: 1px;
    height: 18px;
    margin: 0 1px;
    background-color: #ddd;
}
.toolbar .insert {
    justify-content: flex-start;
    gap: 3px;
    width: 57px;
    padding-left: 5px;
    font-size: 10px;
}
.toolbar .search-tools {
    justify-content: flex-start;
    width: 114px;
    margin-left: 10px;
    padding-left: 7px;
    background-color: #ececec;
    font-size: 10px;
    white-space: nowrap;
}
kbd {
    padding: 0 3px;
    border: 1px solid #bbb;
    border-radius: 1px;
    background-color: #f4f4f4;
    font-family: Inter, "DejaVu Sans", sans-serif;
    font-size: 7px;
    line-height: 12px;
}
kbd:first-of-type {
    margin-left: 2px;
}

/* instance list */
.stage {
    display: flex;
    flex: 1;
    min-height: 0;
}
.panel {
    flex: none;
    width: 146px;
    border-top: 1px solid #e2e2e2;
    border-right: 1px solid #ddd;
    overflow: hidden;
}
h2 {
    font-size: 10px;
    font-weight: 600;
    line-height: 12px;
    color: #222;
}
.config {
    height: 57px;
    margin-right: 4px;
    padding: 5px 2px 0;
    border-bottom: 1px solid #ccc;
    overflow: hidden;
}
.config-row {
    display: flex;
    align-items: center;
    height: 18px;
    margin-top: 8px;
    padding-left: 2px;
}
.config-row.second {
    margin-top: 1px;
}
.config-row label {
    flex: none;
    width: 51px;
    padding-top: 3px;
    font-size: 8px;
    line-height: 10px;
    white-space: nowrap;
    color: #777;
}
select {
    flex: 1;
    min-width: 0;
    height: 18px;
    padding: 0 0 0 2px;
    border: none;
    border-bottom: 1px solid #ddd;
    background: none;
    appearance: none;
    color: #333;
    font: inherit;
    font-size: 10px;
}
.second select {
    padding-left: 16px;
}
.config .caret {
    margin-right: 4px;
}
.filter-row {
    display: flex;
    align-items: center;
    height: 22px;
    margin: 5px 11px 0 6px;
}
.filter-row svg {
    width: 12px;
    height: 12px;
}
.filter-row button svg {
    width: 11px;
    height: 11px;
}
input {
    flex: 1;
    min-width: 0;
    height: 22px;
    margin: 0 9px;
    padding: 0 3px;
    border: 1px solid #ccc;
    border-radius: 2px;
    font: inherit;
}
input::placeholder {
    font-style: italic;
    color: #999;
}
.instances {
    display: flex;
    align-items: center;
    justify-content: space-between;
    height: 22px;
    padding: 0 8px 0 2px;
}
.instances svg {
    width: 13px;
    height: 13px;
}
.tree {
    margin: 0;
    padding: 0;
    list-style: none;
}
.tree li {
    display: flex;
    align-items: center;
    height: 18px;
    padding-left: 2px;
    white-space: nowrap;
}
.tree li:nth-child(even) {
    height: 19px;
}
.tree svg {
    width: 12px;
    height: 12px;
    stroke-width: 1px;
}
.tree .chev {
    width: 9px;
    height: 12px;
    stroke-width: 2px;
    color: #777;
}
.tree .kind {
    margin: 0 2px 0 7px;
    color: #777;
}
.tree .leaf {
    padding-left: 11px;
}
.tree .root span {
    width: 60px;
    margin-left: 4px;
}
.tree .origin {
    padding-left: 21px;
    color: #999;
}
.origin i {
    width: 4px;
    height: 4px;
    margin-right: 7px;
    border-radius: 50%;
    background-color: #ddd;
}
.cut {
    width: 61px;
}
.tree .ref {
    width: 14px;
    margin-left: 1px;
}
.tree .mates .chev {
    margin-right: 5px;
}
.tree .mate {
    padding-left: 14px;
}

/* canvas */
.canvas {
    position: relative;
    flex: 1;
    min-width: 0;
}
.model {
    display: block;
    width: 100%;
    height: 100%;
}
.handle {
    position: absolute;
    top: 224px;
    left: -1px;
    width: 23px;
    height: 24px;
    border: 1px solid #ddd;
    border-left: none;
    background-color: #fff;
}
.handle svg {
    width: 13px;
    height: 13px;
    stroke-width: 1px;
}
.view-cube {
    position: absolute;
    top: 10px;
    right: 9px;
    width: 110px;
    height: 112px;
    font-family: "Liberation Sans", sans-serif;
    font-size: 9px;
}
.view-cube svg {
    width: 110px;
    height: 112px;
    stroke-width: 1px;
}
.view-cube text, .view-cube g {
    stroke: none;
}
.face {
    fill: #222;
    text-anchor: middle;
}
.axis-z {
    fill: #3a35c8;
    font-weight: 700;
}
.axis-x {
    fill: #d33;
    font-weight: 700;
}
.view-mode {
    position: absolute;
    top: 103px;
    right: 14px;
    gap: 5px;
}
.box {
    width: 14px;
    height: 14px;
    stroke-width: 1px;
    color: #777;
}
.side-tools {
    position: absolute;
    top: 177px;
    right: 0;
    border: 1px solid #ddd;
    border-right: none;
    background-color: #fff;
}
.side-tools button {
    width: 22px;
    height: 23px;
    border-bottom: 1px solid #ddd;
}
.side-tools svg {
    width: 14px;
    height: 14px;
    stroke-width: 1px;
}
.pale {
    color: #888;
}
.side-tools .var {
    font-family: "Liberation Serif", serif;
    font-size: 14px;
    font-weight: 700;
    border-bottom: none;
}
.measure {
    position: absolute;
    right: 8px;
    bottom: 2px;
    display: flex;
    gap: 12px;
}
.measure svg {
    width: 13px;
    height: 13px;
    stroke-width: 1px;
}

/* document tabs */
.doc-tabs {
    position: relative;
    display: flex;
    flex: none;
    gap: 3px;
    height: 22px;
    padding-bottom: 1px;
    background-color: #cfcfcf;
    overflow: hidden;
}
.add {
    width: 25px;
}
.add svg {
    width: 12px;
    height: 12px;
    stroke-width: 2px;
}
.doc-tab {
    flex: none;
    justify-content: flex-start;
    gap: 2px;
    padding: 0 6px 0 7px;
    background-color: #e6e6e6;
    color: #555;
    white-space: nowrap;
}
.doc-tab svg {
    width: 13px;
    height: 13px;
    stroke-width: 1px;
    color: #777;
}
.doc-tab .state {
    width: 10px;
    height: 10px;
    margin-right: 2px;
}
.doc-tab.wide {
    width: 141px;
    padding-left: 8px;
}
.doc-tab.active {
    background-color: #fff;
    color: #222;
    border-bottom: 2px solid #3f62b5;
}
.tab-scroll {
    position: absolute;
    top: 0;
    right: 0;
    display: flex;
    align-items: center;
    gap: 6px;
    height: 22px;
    padding: 0 3px 0 2px;
    background-color: #cfcfcf;
    box-shadow: -3px 0 4px #cfcfcf;
}
.tab-scroll svg {
    width: 12px;
    height: 12px;
    stroke-width: 2px;
}
```
